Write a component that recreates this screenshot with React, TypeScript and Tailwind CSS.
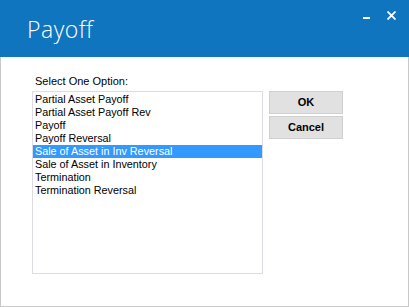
import React from "react";

const items = [
  "Partial Asset Payoff",
  "Partial Asset Payoff Rev",
  "Payoff",
  "Payoff Reversal",
  "Sale of Asset in Inv Reversal",
  "Sale of Asset in Inventory",
  "Termination",
  "Termination Reversal",
];

export default function App() {
  return (
    <div className="w-[409px] h-[307px] flex flex-col bg-white overflow-hidden" style={{ fontFamily: '"Liberation Sans", Arial, sans-serif' }}>
      <div className="h-[57px] bg-[#1075bf] flex shrink-0 relative">
        <div className="pl-[27px] pt-[18px] text-[23px] font-light text-white leading-none tracking-[0.5px]" style={{ fontFamily: '"Open Sans", "Noto Sans", sans-serif' }}>
          Payoff
        </div>
        <div className="absolute left-[363px] top-[17px] w-[7px] h-[2px] bg-white" />
        <svg className="absolute left-[387px] top-[11px]" width="9" height="9" viewBox="0 0 9 9">
          <path d="M0.5 0.5 L8.5 8.5 M8.5 0.5 L0.5 8.5" stroke="white" strokeWidth="1.8" />
        </svg>
      </div>
      <div className="flex-1 border-x border-b border-[#c8c8c8] flex flex-col">
        <div className="pl-[34px] pt-[18px] text-[11px] leading-[13px] text-black">Select One Option:</div>
        <div className="flex pl-[31px] pt-[3px] gap-[6px]">
          <div className="w-[231px] h-[183px] border border-[#dcdce2] pt-[1px]">
            {items.map((it, i) => (
              <div
                key={it}
                className={`h-[13px] text-[10.8px] leading-[13px] pl-[2px] ${i === 4 ? "bg-[#3399ff] text-white" : "text-black"}`}
              >
                {it}
              </div>
            ))}
          </div>
          <div className="flex flex-col gap-[2px]">
            <button className="w-[74px] h-[23px] bg-[#e1e1e1] border border-[#d0d0d0] text-[11px] font-bold text-black leading-none">OK</button>
            <button className="w-[74px] h-[23px] bg-[#e1e1e1] border border-[#d0d0d0] text-[11px] font-bold text-black leading-none">Cancel</button>
          </div>
        </div>
      </div>
    </div>
  );
}
